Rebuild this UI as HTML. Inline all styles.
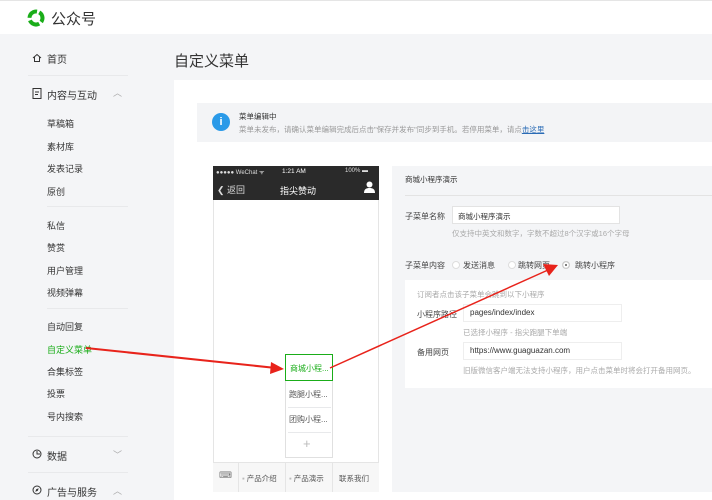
<!DOCTYPE html>
<html><head><meta charset="utf-8"><style>
*{margin:0;padding:0;box-sizing:border-box}
body{width:712px;height:500px;overflow:hidden;background:#f4f5f7;font-family:"Liberation Sans","Noto Sans CJK SC",sans-serif;position:relative;color:#333}
.a{position:absolute;white-space:nowrap}
.s{font-size:9px;color:#353535}
.t{font-size:7.5px;color:#aaa}
.l{font-size:8px;color:#444}
.line{position:absolute;height:1px;background:#e8e9eb}
.rd{position:absolute;width:8px;height:8px;border-radius:50%;border:1px solid #ddd;background:#fff}
</style></head><body>
<div class="a" style="left:0;top:0;width:712px;height:34px;background:#fff;border-top:1px solid #e5e5e5"></div>
<svg class="a" style="left:26px;top:8px" width="20" height="20" viewBox="0 0 20 20"><circle cx="10" cy="10" r="6.5" fill="none" stroke="#1aad19" stroke-width="4" stroke-dasharray="11 2.6" transform="rotate(-60 10 10)"/></svg>
<div class="a" style="left:51px;top:8px;font-size:15px;color:#333">公众号</div>
<svg class="a" style="left:32px;top:53px" width="10" height="10" viewBox="0 0 10 10"><path d="M1 5L5 1.5 9 5M2.5 4v4.5h5V4" fill="none" stroke="#333" stroke-width="1"/></svg>
<div class="a" style="left:47px;top:51px;font-size:10px">首页</div>
<div class="line" style="left:28px;top:75px;width:100px"></div>
<svg class="a" style="left:32px;top:88px" width="10" height="11" viewBox="0 0 10 11"><rect x="1" y="0.5" width="8" height="10" fill="none" stroke="#333"/><path d="M3 4h4M3 6.5h3" stroke="#333"/></svg>
<div class="a" style="left:47px;top:87px;font-size:10px">内容与互动</div>
<div class="a" style="left:113px;top:86px;font-size:9px;color:#aaa">︿</div>
<div class="a s" style="left:47px;top:117px">草稿箱</div>
<div class="a s" style="left:47px;top:140px">素材库</div>
<div class="a s" style="left:47px;top:162px">发表记录</div>
<div class="a s" style="left:47px;top:185px">原创</div>
<div class="line" style="left:47px;top:206px;width:81px"></div>
<div class="a s" style="left:47px;top:219px">私信</div>
<div class="a s" style="left:47px;top:241px">赞赏</div>
<div class="a s" style="left:47px;top:264px">用户管理</div>
<div class="a s" style="left:47px;top:286px">视频弹幕</div>
<div class="line" style="left:47px;top:308px;width:81px"></div>
<div class="a s" style="left:47px;top:320px">自动回复</div>
<div class="a s" style="left:47px;top:343px;color:#1aad19">自定义菜单</div>
<div class="a s" style="left:47px;top:365px">合集标签</div>
<div class="a s" style="left:47px;top:387px">投票</div>
<div class="a s" style="left:47px;top:410px">号内搜索</div>
<div class="line" style="left:28px;top:436px;width:100px"></div>
<svg class="a" style="left:32px;top:449px" width="10" height="10" viewBox="0 0 10 10"><circle cx="5" cy="5" r="4" fill="none" stroke="#333"/><path d="M5 2v3h3" fill="none" stroke="#333"/></svg>
<div class="a" style="left:47px;top:448px;font-size:10px">数据</div>
<div class="a" style="left:113px;top:448px;font-size:9px;color:#aaa">﹀</div>
<div class="line" style="left:28px;top:472px;width:100px"></div>
<svg class="a" style="left:32px;top:485px" width="10" height="10" viewBox="0 0 10 10"><circle cx="5" cy="5" r="4" fill="none" stroke="#333"/><path d="M3.3 6.7L4.2 4.2 6.7 3.3 5.8 5.8z" fill="#333"/></svg>
<div class="a" style="left:47px;top:484px;font-size:10px">广告与服务</div>
<div class="a" style="left:113px;top:484px;font-size:9px;color:#aaa">︿</div>

<div class="a" style="left:174px;top:50px;font-size:15px;color:#333">自定义菜单</div>
<div class="a" style="left:174px;top:80px;width:538px;height:420px;background:#fff"></div>
<div class="a" style="left:197px;top:103px;width:515px;height:39px;background:#f3f4f6"></div>
<div class="a" style="left:212px;top:113px;width:18px;height:18px;border-radius:50%;background:#2a9ae8;color:#fff;font-size:11px;text-align:center;line-height:18px;font-weight:bold">i</div>
<div class="a" style="left:239px;top:111px;font-size:7.5px;color:#333">菜单编辑中</div>
<div class="a" style="left:239px;top:124px;font-size:7.5px;color:#999">菜单未发布，请确认菜单编辑完成后点击"保存并发布"同步到手机。若停用菜单，请点<span style="color:#2a6bb5;text-decoration:underline">击这里</span></div>

<div class="a" style="left:213px;top:166px;width:166px;height:326px;border:1px solid #e5e5e5;background:#fff"></div>
<div class="a" style="left:213px;top:166px;width:166px;height:34px;background:#2a2a2a;color:#fff"></div>
<div class="a" style="left:216px;top:168px;font-size:6px;color:#ddd">●●●●● WeChat ᯤ</div>
<div class="a" style="left:282px;top:168px;font-size:6.5px;color:#fff">1:21 AM</div>
<div class="a" style="left:345px;top:168px;font-size:6px;color:#ddd">100% ▬</div>
<div class="a" style="left:217px;top:183px;font-size:9px;color:#ddd">❮ 返回</div>
<div class="a" style="left:280px;top:184px;font-size:9px;color:#fff">指尖赞动</div>
<svg class="a" style="left:364px;top:181px" width="11" height="12" viewBox="0 0 11 12"><circle cx="5.5" cy="3.5" r="3" fill="#fff"/><path d="M0 12c0-4 2.5-5 5.5-5s5.5 1 5.5 5z" fill="#fff"/></svg>
<div class="a" style="left:213px;top:462px;width:166px;height:30px;background:#f7f7f7;border-top:1px solid #e5e5e5"></div>
<div class="a" style="left:238px;top:462px;width:1px;height:30px;background:#e5e5e5"></div>
<div class="a" style="left:285px;top:462px;width:1px;height:30px;background:#e5e5e5"></div>
<div class="a" style="left:332px;top:462px;width:1px;height:30px;background:#e5e5e5"></div>
<div class="a" style="left:219px;top:470px;font-size:9px;color:#777">⌨</div>
<div class="a" style="left:242px;top:473px;font-size:7.5px;color:#555"><span style="color:#bbb">▪</span> 产品介绍</div>
<div class="a" style="left:289px;top:473px;font-size:7.5px;color:#555"><span style="color:#bbb">▪</span> 产品演示</div>
<div class="a" style="left:339px;top:473px;font-size:7.5px;color:#555">联系我们</div>
<div class="a" style="left:285px;top:354px;width:48px;height:104px;background:#fff;border:1px solid #e0e0e0"></div>
<div class="a" style="left:285px;top:354px;width:48px;height:27px;border:1px solid #1aad19;font-size:8px;color:#1aad19;padding:8px 0 0 4px">商城小程...</div>
<div class="a" style="left:289px;top:389px;font-size:8px;color:#555">跑腿小程...</div>
<div class="line" style="left:288px;top:407px;width:43px"></div>
<div class="a" style="left:289px;top:414px;font-size:8px;color:#555">团购小程...</div>
<div class="line" style="left:288px;top:432px;width:43px"></div>
<div class="a" style="left:303px;top:436px;font-size:13px;color:#bbb">+</div>

<div class="a" style="left:392px;top:166px;width:320px;height:326px;background:#f4f5f7"></div>
<div class="a" style="left:405px;top:174px;font-size:7.5px;color:#333">商城小程序演示</div>
<div class="line" style="left:405px;top:195px;width:307px;background:#e3e3e3"></div>
<div class="a l" style="left:405px;top:211px">子菜单名称</div>
<div class="a" style="left:452px;top:206px;width:168px;height:18px;background:#fff;border:1px solid #e3e3e3;font-size:7.5px;padding:4px 5px">商城小程序演示</div>
<div class="a t" style="left:452px;top:228px">仅支持中英文和数字，字数不超过8个汉字或16个字母</div>
<div class="a l" style="left:405px;top:260px">子菜单内容</div>
<div class="rd" style="left:452px;top:261px"></div>
<div class="a l" style="left:463px;top:260px">发送消息</div>
<div class="rd" style="left:508px;top:261px"></div>
<div class="a l" style="left:518px;top:260px">跳转网页</div>
<div class="rd" style="left:562px;top:261px;border-color:#ccc;box-shadow:inset 0 0 0 2px #fff;background:#555"></div>
<div class="a l" style="left:575px;top:260px">跳转小程序</div>
<div class="a" style="left:405px;top:280px;width:307px;height:108px;background:#fff"></div>
<div class="a t" style="left:417px;top:289px">订阅者点击该子菜单会跳到以下小程序</div>
<div class="a l" style="left:417px;top:309px">小程序路径</div>
<div class="a" style="left:463px;top:304px;width:159px;height:18px;background:#fff;border:1px solid #eee;font-size:8px;padding:3px 6px">pages/index/index</div>
<div class="a t" style="left:463px;top:327px">已选择小程序 - 指尖跑腿下单端</div>
<div class="a l" style="left:417px;top:347px">备用网页</div>
<div class="a" style="left:463px;top:342px;width:159px;height:18px;background:#fff;border:1px solid #eee;font-size:8px;padding:3px 6px">https://www.guaguazan.com</div>
<div class="a t" style="left:463px;top:365px">旧版微信客户端无法支持小程序，用户点击菜单时将会打开备用网页。</div>

<svg class="a" style="left:0;top:0" width="712" height="500">
<line x1="86" y1="348" x2="276" y2="368" stroke="#e8231b" stroke-width="2"/>
<polygon points="284,369 271,362 270,374" fill="#e8231b"/>
<line x1="330" y1="368" x2="548" y2="270" stroke="#e8231b" stroke-width="1.5"/>
<polygon points="558,265 543,264 549,276" fill="#e8231b"/>
</svg>
</body></html>
